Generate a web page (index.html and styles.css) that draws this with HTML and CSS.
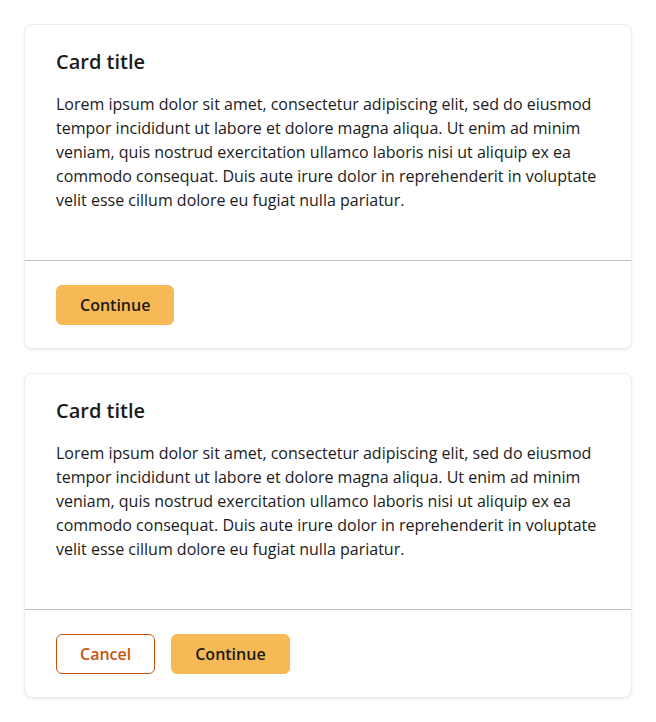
FILE: index.html
```html
<!DOCTYPE html>
<html lang="en">
<head>
<meta charset="utf-8">
<title>Cards</title>
<link rel="stylesheet" href="styles.css">
</head>
<body>
<main class="stack">
  <section class="card">
    <div class="card-body">
      <h2 class="card-title">Card title</h2>
      <p class="card-text">Lorem ipsum dolor sit amet, consectetur adipiscing elit, sed do eiusmod tempor incididunt ut labore et dolore magna aliqua. Ut enim ad minim veniam, quis nostrud exercitation ullamco laboris nisi ut aliquip ex ea commodo consequat. Duis aute irure dolor in reprehenderit in voluptate velit esse cillum dolore eu fugiat nulla pariatur.</p>
    </div>
    <div class="card-footer">
      <button class="btn btn-primary">Continue</button>
    </div>
  </section>
  <section class="card">
    <div class="card-body">
      <h2 class="card-title">Card title</h2>
      <p class="card-text">Lorem ipsum dolor sit amet, consectetur adipiscing elit, sed do eiusmod tempor incididunt ut labore et dolore magna aliqua. Ut enim ad minim veniam, quis nostrud exercitation ullamco laboris nisi ut aliquip ex ea commodo consequat. Duis aute irure dolor in reprehenderit in voluptate velit esse cillum dolore eu fugiat nulla pariatur.</p>
    </div>
    <div class="card-footer">
      <button class="btn btn-outline">Cancel</button>
      <button class="btn btn-primary">Continue</button>
    </div>
  </section>
</main>
</body>
</html>
```
FILE: styles.css
```css
* { box-sizing: border-box; }
html, body { margin: 0; padding: 0; background: #ffffff; }
body {
  font-family: "Open Sans", "Noto Sans", sans-serif;
  color: #1b1b1b;
  padding: 24px;
}
.stack {
  display: flex;
  flex-direction: column;
  gap: 24px;
}
.card {
  background: #fff;
  border: 1px solid #ececec;
  border-radius: 8px;
  box-shadow: 0 1px 3px rgba(0, 0, 0, 0.08);
}
.card-body {
  padding: 23px 31px 48px;
  display: flex;
  flex-direction: column;
  gap: 16px;
}
.card-title {
  margin: 0;
  font-size: 20px;
  line-height: 28px;
  font-weight: 600;
}
.card-text {
  margin: 0;
  font-size: 16px;
  line-height: 24px;
  font-weight: 400;
}
.card-footer {
  border-top: 1px solid #b9c3cf;
  padding: 24px 31px 23px;
  display: flex;
  gap: 16px;
}
.btn {
  height: 40px;
  padding: 0 23px;
  border-radius: 6px;
  font-family: inherit;
  font-size: 16px;
  font-weight: 600;
  border: 1px solid transparent;
  cursor: pointer;
}
.btn-primary {
  background: #f7b955;
  border-color: #f7b955;
  color: #1b1b1b;
}
.btn-outline {
  background: #fff;
  border-color: #c9530d;
  color: #c9530d;
}
```
